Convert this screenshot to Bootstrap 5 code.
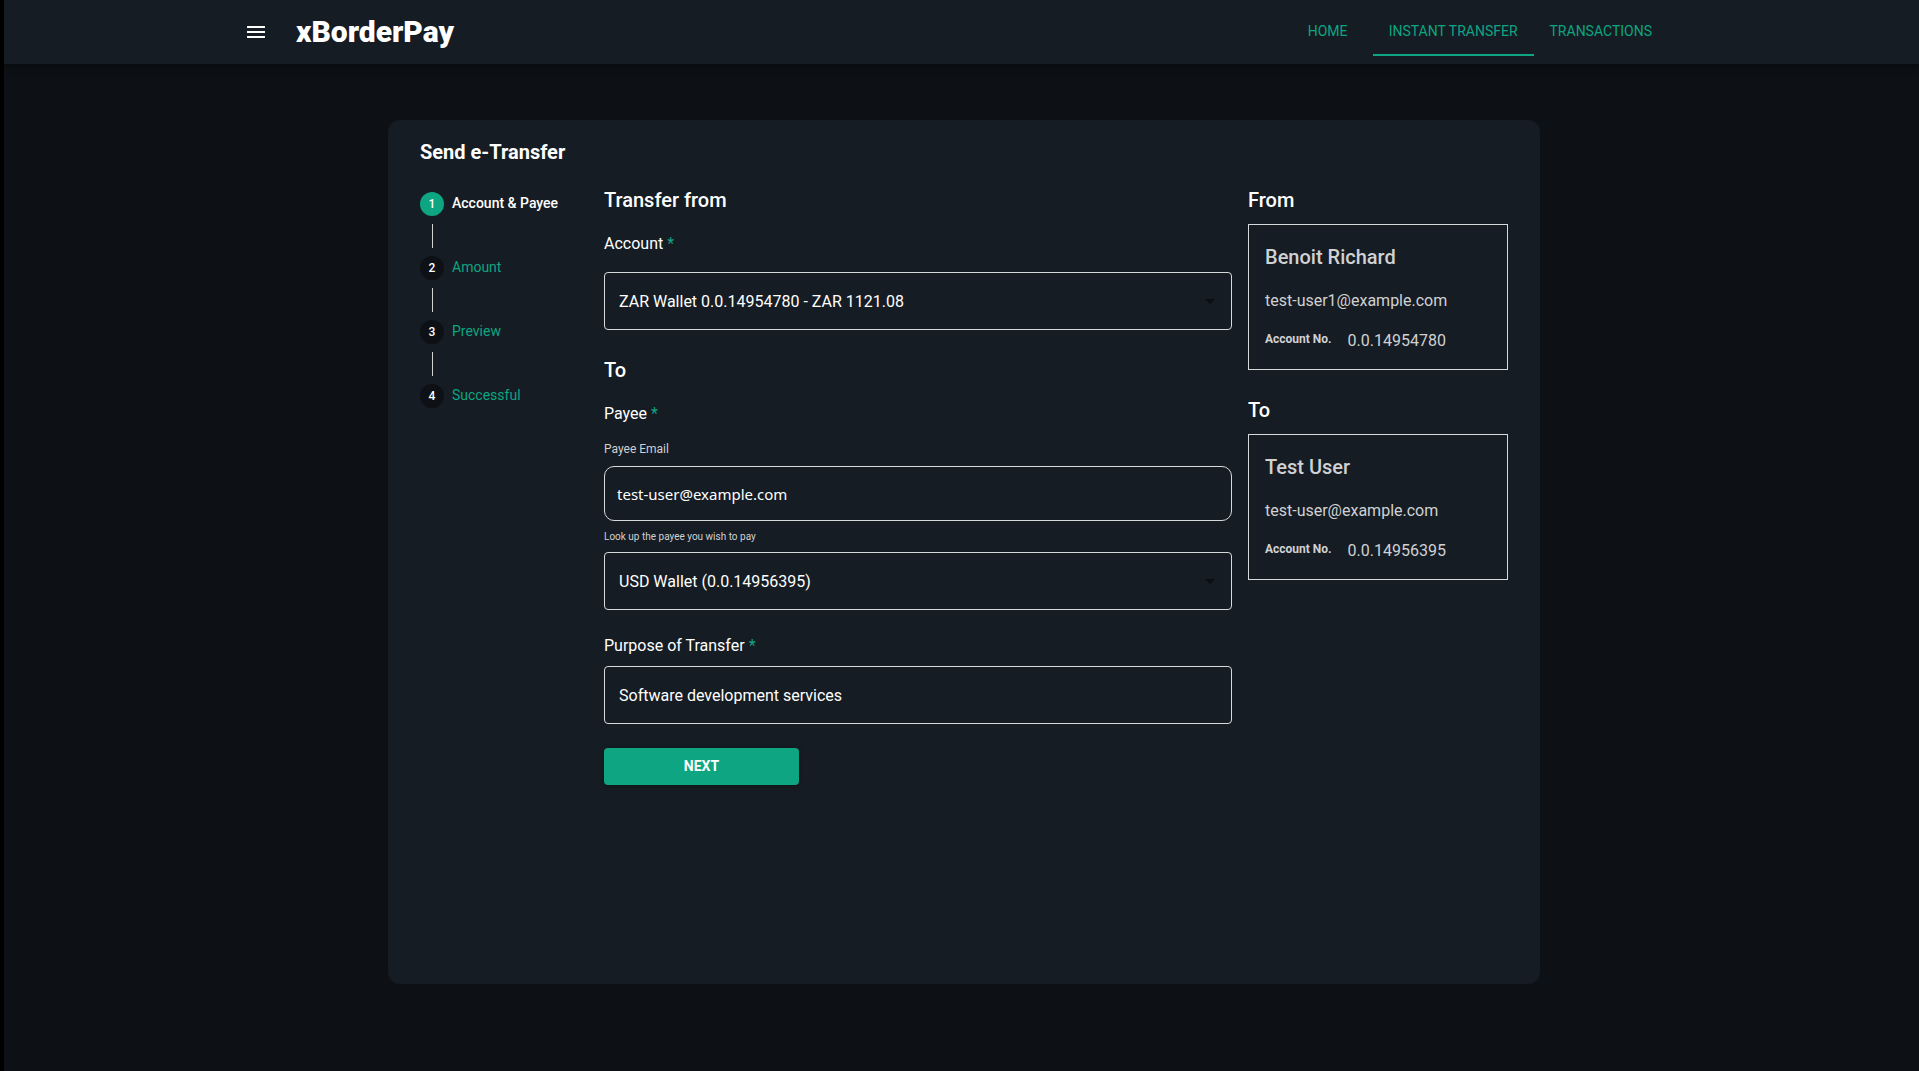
<!DOCTYPE html>
<html lang="en">
<head>
<meta charset="utf-8">
<meta name="viewport" content="width=device-width, initial-scale=1">
<title>xBorderPay - Send e-Transfer</title>
<link href="https://cdn.jsdelivr.net/npm/bootstrap@5.3.0/dist/css/bootstrap.min.css" rel="stylesheet">
<style>
  :root { --page: #0d1014; --panel: #161c23; --accent: #0da582; --line: #d6d9dc; --soft: #d0d1d3; }
  body { background: var(--page); color: #fff; font-family: Roboto, "Liberation Sans", sans-serif; font-size: 16px; line-height: 24px; border-left: 4px solid #000; min-height: 100vh; }
  .shell { padding-left: 5px; }
  .topbar { background: var(--panel); height: 64px; box-shadow: 0 2px 8px rgba(0,0,0,.4); }
  .topbar-inner { max-width: 1440px; }
  .menu-btn { line-height: 0; color: #fff; }
  .brand { font-size: 30px; line-height: 36px; font-weight: 900; color: #fff; margin-left: 28px; }
  .tab-link { display: block; min-width: 90px; height: 48px; padding: 12px 16px; font-size: 14px; line-height: 22px; text-align: center; color: var(--accent); text-decoration: none; text-transform: uppercase; border-bottom: 2px solid transparent; }
  .tab-link.active { border-color: var(--accent); }
  .panel { max-width: 1152px; min-height: 864px; margin-top: 56px; padding: 20px 32px; background: var(--panel); border-radius: 12px; }
  h1, h2, h3 { font-size: 20px; line-height: 24px; margin: 0; }
  h1 { font-weight: 700; }
  h2, h3 { font-weight: 500; }
  h3 { color: var(--soft); }
  .steps-col { width: 168px; flex: none; padding-top: 4px; }
  .step { display: flex; height: 24px; gap: 8px; font-size: 14px; line-height: 22px; color: var(--accent); }
  .step-num { width: 24px; height: 24px; border-radius: 50%; background: var(--page); color: #fff; font-size: 12px; line-height: 24px; font-weight: 500; text-align: center; }
  .step.current { color: #fff; font-weight: 500; }
  .step.current .step-num { background: var(--accent); }
  .step-line { height: 24px; margin: 8px 0 8px 12px; border-left: 1px solid var(--soft); }
  .req { color: var(--accent); }
  .box-field { height: 58px; padding: 0 14px; font-size: 16px; line-height: 24px; color: #fff; background-color: transparent; border: 1px solid var(--line); border-radius: 4px; }
  .box-field:focus { color: #fff; background-color: transparent; border-color: var(--accent); box-shadow: none; }
  select.box-field { padding-top: 2px; background-image: url("data:image/svg+xml,%3Csvg xmlns='http://www.w3.org/2000/svg' viewBox='0 0 10 5'%3E%3Cpath d='M0 0h10L5 5z' fill='%230a0d11'/%3E%3C/svg%3E"); background-size: 10px 5px; background-position: right 16px center; }
  select.box-field option { background: var(--panel); }
  .email-field { height: 55px; padding: 0 12px; border-radius: 10px; font-family: "Noto Sans", sans-serif; font-size: 15px; }
  .caption { font-size: 12px; line-height: 14px; color: var(--soft); padding-bottom: 2px; }
  .hint { font-size: 10px; line-height: 15px; color: var(--soft); }
  .next-btn { width: 195px; height: 37px; padding: 0 0 2px; font-size: 14px; line-height: 24px; font-weight: 700; color: #fff; background: var(--accent); border: 0; border-radius: 4px; box-shadow: 0 1px 4px rgba(0,0,0,.35); }
  .next-btn:hover { background: #0b8c6c; color: #fff; }
  .side-col { width: 260px; flex: none; }
  .party { height: 146px; padding: 20px 16px; border: 1px solid var(--line); color: var(--soft); }
  .party-mail { margin: 20px 0 16px; }
  .acct-tag { font-size: 12px; line-height: 20px; font-weight: 700; }
</style>
<script src="https://cdn.jsdelivr.net/npm/bootstrap@5.3.0/dist/js/bootstrap.bundle.min.js"></script>
</head>
<body>
<header class="topbar shell">
  <div class="topbar-inner mx-auto h-100 d-flex align-items-center pe-3">
    <button type="button" class="menu-btn btn p-0 border-0" aria-label="Menu">
      <svg width="24" height="24" viewBox="0 0 24 24" fill="#fff"><path d="M3 18h18v-2H3v2zm0-5h18v-2H3v2zm0-7v2h18V6H3z"/></svg>
    </button>
    <a href="#" class="brand text-decoration-none">xBorderPay</a>
    <nav class="d-flex ms-auto" aria-label="Main">
      <a class="tab-link" href="#">Home</a>
      <a class="tab-link active" href="#" aria-current="page">Instant Transfer</a>
      <a class="tab-link" href="#">Transactions</a>
    </nav>
  </div>
</header>
<main class="shell">
  <section class="panel mx-auto">
    <h1>Send e-Transfer</h1>
    <div class="d-flex gap-3 mt-4">
      <div class="steps-col">
        <div class="step current"><span class="step-num">1</span>Account &amp; Payee</div>
        <div class="step-line"></div>
        <div class="step"><span class="step-num">2</span>Amount</div>
        <div class="step-line"></div>
        <div class="step"><span class="step-num">3</span>Preview</div>
        <div class="step-line"></div>
        <div class="step"><span class="step-num">4</span>Successful</div>
      </div>
      <form class="flex-grow-1">
        <h2>Transfer from</h2>
        <label class="d-block mt-3 pt-1 mb-3" for="account">Account <span class="req">*</span></label>
        <select id="account" class="form-select box-field"><option>ZAR Wallet 0.0.14954780 - ZAR 1121.08</option></select>
        <h2 class="mt-4 pt-1">To</h2>
        <label class="d-block mt-3 pt-1" for="wallet">Payee <span class="req">*</span></label>
        <label class="caption d-block mt-3 mb-2" for="email">Payee Email</label>
        <input id="email" type="email" class="form-control box-field email-field" value="test-user@example.com">
        <div class="hint my-2">Look up the payee you wish to pay</div>
        <select id="wallet" class="form-select box-field"><option>USD Wallet (0.0.14956395)</option></select>
        <label class="d-block mt-4 mb-2" for="purpose">Purpose of Transfer <span class="req">*</span></label>
        <input id="purpose" type="text" class="form-control box-field" value="Software development services">
        <button type="button" class="btn next-btn mt-4">NEXT</button>
      </form>
      <aside class="side-col">
        <h2 class="mb-2 pb-1">From</h2>
        <div class="party">
          <h3>Benoit Richard</h3>
          <div class="party-mail">test-user1@example.com</div>
          <div class="d-flex gap-3"><span class="acct-tag">Account No.</span><span>0.0.14954780</span></div>
        </div>
        <h2 class="mt-4 pt-1 mb-2 pb-1">To</h2>
        <div class="party">
          <h3>Test User</h3>
          <div class="party-mail">test-user@example.com</div>
          <div class="d-flex gap-3"><span class="acct-tag">Account No.</span><span>0.0.14956395</span></div>
        </div>
      </aside>
    </div>
  </section>
</main>
</body>
</html>
